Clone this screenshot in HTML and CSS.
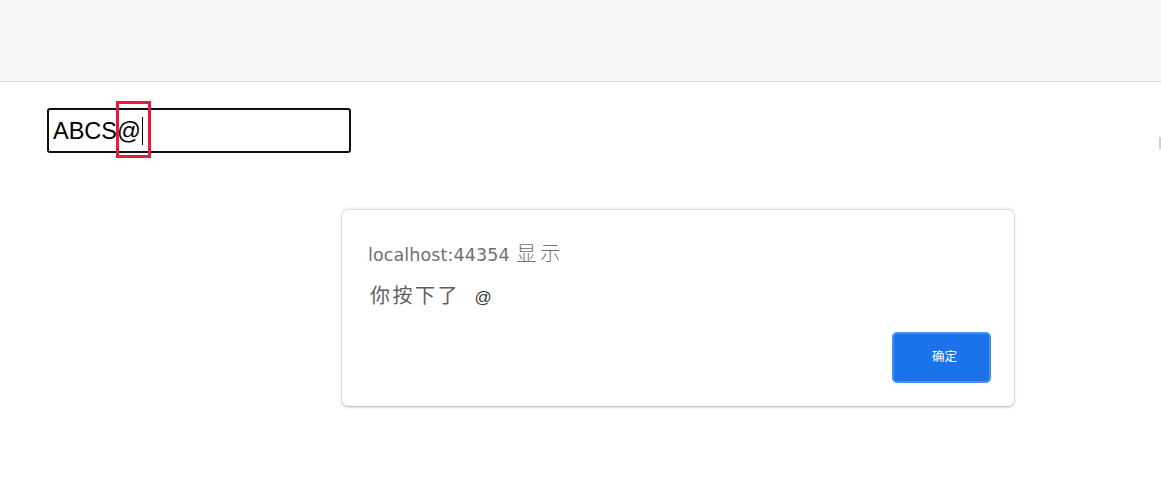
FILE: index.html
```html
<!DOCTYPE html>
<html lang="zh-CN">
<head>
<meta charset="utf-8">
<title>alert</title>
<link rel="stylesheet" href="styles.css">
</head>
<body>
  <header class="topbar"></header>
  <main class="page">
    <div class="field">
      <span class="field-text">ABCS@</span><span class="caret"></span>
    </div>
  </main>
  <div class="mark" aria-hidden="true"></div>
  <div class="highlight" aria-hidden="true"></div>
  <div class="dialog" role="alertdialog">
    <div class="dialog-title">localhost:44354 <span class="cjk-wide">显示</span></div>
    <div class="dialog-message"><span class="cjk-wide">你按下了</span> <span class="at">@</span></div>
    <div class="dialog-actions">
      <button class="ok-btn" type="button">确定</button>
    </div>
  </div>
</body>
</html>
```
FILE: styles.css
```css
html, body {
  margin: 0;
  padding: 0;
  background: #ffffff;
  height: 100%;
  overflow: hidden;
}
body {
  font-family: "Liberation Sans", "Noto Sans CJK SC", sans-serif;
  position: relative;
}
.topbar {
  height: 81px;
  background: #f7f7f7;
  border-bottom: 1px solid #d6d6d6;
}
.page {
  padding: 26px 0 0 47px;
}
.field {
  box-sizing: border-box;
  width: 304px;
  height: 45px;
  border: 2px solid #111111;
  border-radius: 3px;
  display: flex;
  align-items: center;
  padding: 0 0 0 4px;
  font-family: "Liberation Sans", Arial, sans-serif;
  font-size: 23.5px;
  color: #000000;
}
.field-text {
  line-height: 26px;
}
.caret {
  display: inline-block;
  width: 0;
  height: 28px;
  border-left: 1.5px solid #000;
  margin-left: 1px;
}
.highlight {
  position: absolute;
  left: 116px;
  top: 101px;
  width: 29px;
  height: 51px;
  border: 3px solid #ea1a3d;
}
.mark {
  position: absolute;
  left: 1159px;
  top: 137px;
  width: 2px;
  height: 12px;
  background: #d0d0d0;
}
.dialog {
  position: absolute;
  left: 342px;
  top: 210px;
  width: 672px;
  height: 196px;
  box-sizing: border-box;
  background: #ffffff;
  border-radius: 6px;
  box-shadow: 0 0 0 1px rgba(0,0,0,0.05), 0 1px 3px rgba(0,0,0,0.28), 0 -3px 0 rgba(0,0,0,0.035);
  padding: 31px 23px 23px 26px;
  display: flex;
  flex-direction: column;
}
.dialog-title {
  font-family: "DejaVu Sans", "Noto Sans CJK SC", sans-serif;
  font-size: 17.5px;
  line-height: 24px;
  color: #707070;
  letter-spacing: 0.1px;
}
.dialog-title .cjk-wide {
  font-family: "Noto Sans CJK SC", sans-serif;
  font-size: 20px;
  letter-spacing: 4px;
  font-weight: 300;
  margin-left: 1px;
}
.dialog-message {
  margin-top: 14px;
  font-family: "Noto Sans CJK SC", sans-serif;
  font-size: 20px;
  line-height: 28px;
  color: #5e5e5e;
  padding-left: 2px;
}
.dialog-message .cjk-wide {
  letter-spacing: 2.5px;
  font-weight: 400;
}
.at {
  font-family: "Liberation Sans", sans-serif;
  font-size: 17px;
  margin-left: 10px;
  color: #333;
}
.dialog-actions {
  margin-top: auto;
  display: flex;
  justify-content: flex-end;
}
.ok-btn {
  width: 99px;
  height: 51px;
  box-sizing: border-box;
  background: #1a73e8;
  border: 2px solid #4a8ff0;
  border-radius: 5px;
  color: #ffffff;
  font-family: "Noto Sans CJK SC", sans-serif;
  font-size: 12.5px;
  padding: 0 0 5px 6px;
  cursor: pointer;
}
```
